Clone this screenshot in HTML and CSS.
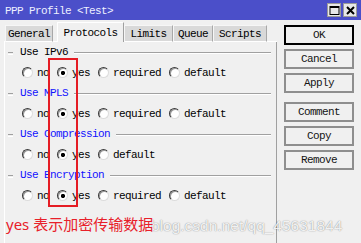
FILE: index.html
```html
<!DOCTYPE html>
<html>
<head>
<meta charset="utf-8">
<link rel="stylesheet" href="styles.css">
</head>
<body>
<div class="window">
  <div class="titlebar">
    <span class="title">PPP Profile &lt;Test&gt;</span>
    <div class="ctrls">
      <span class="ctl"><svg width="11" height="11" viewBox="0 0 11 11"><rect x="1" y="1.5" width="9" height="8" fill="none" stroke="#000" stroke-width="1"/><rect x="1" y="1" width="9" height="2" fill="#000"/></svg></span>
      <span class="ctl"><svg width="11" height="11" viewBox="0 0 11 11"><path d="M2 2 L9 9 M9 2 L2 9" stroke="#000" stroke-width="2"/></svg></span>
    </div>
  </div>
  <div class="main">
    <div class="tabs-area">
      <div class="tabstrip">
        <span class="tab-edge"></span>
        <span class="tab w-general">General</span>
        <span class="tab-gap"></span>
        <span class="tab active w-protocols">Protocols</span>
        <span class="tab w-limits">Limits</span>
        <span class="tab w-queue">Queue</span>
        <span class="tab w-scripts">Scripts</span>
        <span class="tab-fill"></span>
      </div>
      <div class="panel">
        <div class="group-head"><span class="dash"></span><span class="gtitle black">Use IPv6</span><span class="gline"></span></div>
        <div class="row">
          <span class="opt"><span class="radio"></span>no</span>
          <span class="opt"><span class="radio on"></span>yes</span>
          <span class="opt"><span class="radio"></span>required</span>
          <span class="opt"><span class="radio"></span>default</span>
        </div>
        <div class="group-head"><span class="dash"></span><span class="gtitle">Use MPLS</span><span class="gline"></span></div>
        <div class="row">
          <span class="opt"><span class="radio"></span>no</span>
          <span class="opt"><span class="radio on"></span>yes</span>
          <span class="opt"><span class="radio"></span>required</span>
          <span class="opt"><span class="radio"></span>default</span>
        </div>
        <div class="group-head"><span class="dash"></span><span class="gtitle">Use Compression</span><span class="gline"></span></div>
        <div class="row">
          <span class="opt"><span class="radio"></span>no</span>
          <span class="opt"><span class="radio on"></span>yes</span>
          <span class="opt"><span class="radio"></span>default</span>
        </div>
        <div class="group-head"><span class="dash"></span><span class="gtitle">Use Encryption</span><span class="gline"></span></div>
        <div class="row">
          <span class="opt"><span class="radio"></span>no</span>
          <span class="opt"><span class="radio on"></span>yes</span>
          <span class="opt"><span class="radio"></span>required</span>
          <span class="opt"><span class="radio"></span>default</span>
        </div>
      </div>
    </div>
    <div class="buttons">
      <div class="btn default">OK</div>
      <div class="btn">Cancel</div>
      <div class="btn">Apply</div>
      <div class="btn sep">Comment</div>
      <div class="btn">Copy</div>
      <div class="btn">Remove</div>
    </div>
  </div>
  <div class="annot-box"></div>
  <div class="watermark">blog.csdn.net/qq_45631844</div>
  <div class="annot-text">yes 表示加密传输数据</div>
</div>
</body>
</html>
```
FILE: styles.css
```css
html, body {
  margin: 0;
  padding: 0;
}
body {
  width: 361px;
  height: 243px;
  overflow: hidden;
  background: #f0f0f0;
  font-family: "Liberation Mono", "DejaVu Sans Mono", monospace;
  font-size: 11px;
  letter-spacing: -0.6px;
  color: #000;
}
.window {
  position: relative;
  width: 361px;
  height: 243px;
  overflow: hidden;
}
.titlebar {
  height: 20px;
  background: #4b4fc9;
  display: flex;
  align-items: center;
  padding-left: 5px;
  color: #eef0ff;
}
.title {
  flex: 1;
  padding-top: 1px;
}
.ctrls {
  display: flex;
  gap: 2px;
  margin-right: 4px;
}
.ctl {
  width: 14px;
  height: 14px;
  box-sizing: border-box;
  background: #e8e8e8;
  border: 1px solid #9a9a9a;
  display: flex;
  align-items: center;
  justify-content: center;
}
.main {
  display: flex;
  height: 223px;
}
.tabs-area {
  margin-left: 4px;
  width: 273px;
  display: flex;
  flex-direction: column;
}
.tabstrip {
  height: 22px;
  display: flex;
  align-items: flex-end;
}
.tab-edge {
  width: 1px;
  height: 1px;
  background: #fff;
}
.tab-gap {
  width: 4px;
  height: 1px;
  background: #fff;
}
.tab-fill {
  flex: 1;
  height: 1px;
  background: #fff;
}
.tab {
  height: 17px;
  box-sizing: border-box;
  background: #d9d9d9;
  border-left: 1px solid #f6f6f6;
  border-top: 1px solid #f6f6f6;
  border-right: 1px solid #a8a8a8;
  border-bottom: 1px solid #fff;
  display: flex;
  align-items: center;
  justify-content: center;
  padding-top: 1px;
}
.tab.active {
  height: 20px;
  background: #f0f0f0;
  border-left: 1px solid #fff;
  border-top: 1px solid #fff;
  border-right: 1px solid #a0a0a0;
  border-bottom: none;
  padding-top: 0;
}
.w-general { width: 48px; }
.w-protocols { width: 67px; }
.w-limits { width: 49px; }
.w-queue { width: 40px; }
.w-scripts { width: 54px; }
.panel {
  flex: 1;
  border-left: 1px solid #fff;
  border-right: 1px solid #a0a0a0;
  display: flex;
  flex-direction: column;
}
.group-head {
  height: 20px;
  display: flex;
  align-items: center;
  padding-left: 3px;
}
.dash {
  width: 5px;
  height: 1px;
  border-top: 1px solid #a0a0a0;
  border-bottom: 1px solid #fff;
  margin-right: 7px;
  margin-top: 2px;
}
.gtitle {
  color: #1212ff;
}
.gtitle.black {
  color: #000;
}
.gline {
  flex: 1;
  height: 0;
  border-top: 1px solid #a0a0a0;
  border-bottom: 1px solid #fff;
  margin: 2px 5px 0 6px;
}
.row {
  height: 21px;
  display: flex;
  align-items: center;
  padding-left: 17px;
}
.opt {
  display: flex;
  align-items: center;
  margin-right: 8px;
}
.radio {
  width: 11px;
  height: 11px;
  box-sizing: border-box;
  border-radius: 50%;
  border: 1px solid;
  border-color: #3a3a3a #dcdcdc #dcdcdc #3a3a3a;
  box-shadow: inset 1px 1px 0 #9a9a9a;
  background: #fff;
  margin-right: 4px;
}
.radio.on {
  background: radial-gradient(circle at 55% 55%, #000 0 1.8px, #fff 2.4px);
}
.buttons {
  margin-left: 7px;
  padding-top: 5px;
  display: flex;
  flex-direction: column;
  gap: 4px;
}
.btn {
  width: 70px;
  height: 20px;
  box-sizing: border-box;
  border: 2px solid #8e8e8e;
  display: flex;
  align-items: center;
  justify-content: center;
  color: #141414;
}
.btn.default {
  border-color: #000;
}
.btn.sep {
  margin-top: 5px;
}
.annot-box {
  position: absolute;
  left: 48px;
  top: 58px;
  width: 30px;
  height: 149px;
  box-sizing: border-box;
  border: 2px solid #e51c24;
}
.annot-text {
  position: absolute;
  left: 6px;
  top: 217px;
  font-family: "Noto Sans", "Noto Sans CJK SC", sans-serif;
  font-size: 15px;
  line-height: 15px;
  letter-spacing: 0;
  color: #e8202a;
}
.watermark {
  position: absolute;
  left: 151px;
  top: 218px;
  font-family: "Liberation Sans", Arial, sans-serif;
  font-size: 15.5px;
  line-height: 15px;
  letter-spacing: 0;
  color: rgba(255, 255, 255, 0.9);
  text-shadow: 0 0 1px rgba(0, 0, 0, 0.4), 0 0 2px rgba(0, 0, 0, 0.15);
}
```
